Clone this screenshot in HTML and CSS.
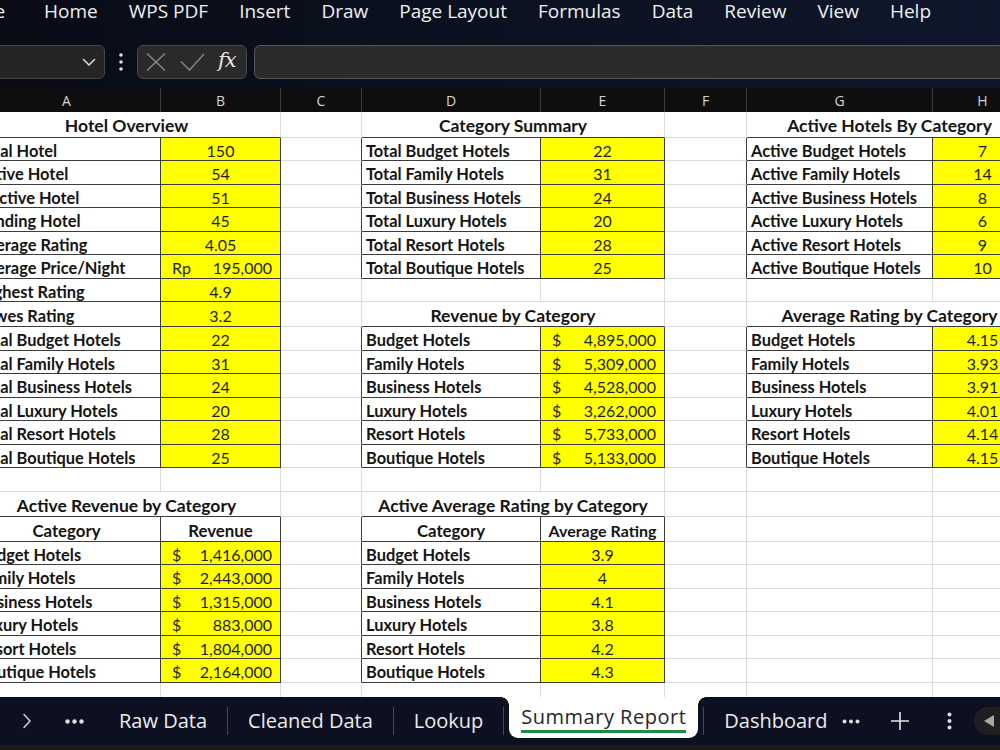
FILE: index.html
```html
<!DOCTYPE html>
<html lang="en">
<head>
<meta charset="utf-8">
<title>Summary Report</title>
<link rel="stylesheet" href="styles.css">
</head>
<body>
<div class="top">
  <nav class="menubar">
    <span class="mfile">File</span>
    <span>Home</span>
    <span>WPS PDF</span>
    <span>Insert</span>
    <span>Draw</span>
    <span>Page Layout</span>
    <span>Formulas</span>
    <span>Data</span>
    <span>Review</span>
    <span>View</span>
    <span>Help</span>
  </nav>
  <div class="fbar">
    <div class="namebox">
      <svg width="14" height="9" viewBox="0 0 14 9"><path d="M1.5 1.5 L7 7 L12.5 1.5" fill="none" stroke="#d8d8d8" stroke-width="1.6" stroke-linecap="round" stroke-linejoin="round"/></svg>
    </div>
    <div class="vdots">
      <svg width="6" height="20" viewBox="0 0 6 20"><circle cx="3" cy="3" r="1.8" fill="#dcdcdc"/><circle cx="3" cy="10" r="1.8" fill="#dcdcdc"/><circle cx="3" cy="17" r="1.8" fill="#dcdcdc"/></svg>
    </div>
    <div class="fxbox">
      <svg class="ic-x" width="20" height="18" viewBox="0 0 20 18"><path d="M1 0.5 L19 17.5 M19 0.5 L1 17.5" stroke="#858585" stroke-width="1.5" fill="none"/></svg>
      <svg class="ic-ok" width="25" height="18" viewBox="0 0 25 18"><path d="M1 8.5 L9.5 17 L24 1" stroke="#858585" stroke-width="1.5" fill="none"/></svg>
      <span class="fx">fx</span>
    </div>
    <div class="finput"></div>
  </div>
</div>

<div class="colheads">
  <div>A</div><div>B</div><div>C</div><div>D</div><div>E</div><div>F</div><div>G</div><div>H</div>
</div>

<div class="sheet">
  <div class="grid">
    <!-- r1 -->
    <div class="c t db">Hotel Overview</div><div class="c"></div><div class="c t db">Category Summary</div><div class="c"></div><div class="c t db">Active Hotels By Category</div>
    <!-- r2 -->
    <div class="c l">Total Hotel</div><div class="c v">150</div><div class="c dr"></div><div class="c l">Total Budget Hotels</div><div class="c v">22</div><div class="c dr"></div><div class="c l">Active Budget Hotels</div><div class="c v">7</div>
    <!-- r3 -->
    <div class="c l">Active Hotel</div><div class="c v">54</div><div class="c dr"></div><div class="c l">Total Family Hotels</div><div class="c v">31</div><div class="c dr"></div><div class="c l">Active Family Hotels</div><div class="c v">14</div>
    <!-- r4 -->
    <div class="c l">Inactive Hotel</div><div class="c v">51</div><div class="c dr"></div><div class="c l">Total Business Hotels</div><div class="c v">24</div><div class="c dr"></div><div class="c l">Active Business Hotels</div><div class="c v">8</div>
    <!-- r5 -->
    <div class="c l">Pending Hotel</div><div class="c v">45</div><div class="c dr"></div><div class="c l">Total Luxury Hotels</div><div class="c v">20</div><div class="c dr"></div><div class="c l">Active Luxury Hotels</div><div class="c v">6</div>
    <!-- r6 -->
    <div class="c l">Average Rating</div><div class="c v">4.05</div><div class="c dr"></div><div class="c l">Total Resort Hotels</div><div class="c v">28</div><div class="c dr"></div><div class="c l">Active Resort Hotels</div><div class="c v">9</div>
    <!-- r7 -->
    <div class="c l">Average Price/Night</div><div class="c m"><span>Rp</span><span>195,000</span></div><div class="c dr"></div><div class="c l">Total Boutique Hotels</div><div class="c v">25</div><div class="c dr"></div><div class="c l">Active Boutique Hotels</div><div class="c v">10</div>
    <!-- r8 -->
    <div class="c l">Highest Rating</div><div class="c v">4.9</div><div class="c"></div><div class="c"></div><div class="c"></div><div class="c"></div><div class="c"></div><div class="c"></div>
    <!-- r9 -->
    <div class="c l">Lowes Rating</div><div class="c v">3.2</div><div class="c"></div><div class="c t db">Revenue by Category</div><div class="c"></div><div class="c t db">Average Rating by Category</div>
    <!-- r10 -->
    <div class="c l">Total Budget Hotels</div><div class="c v">22</div><div class="c dr"></div><div class="c l">Budget Hotels</div><div class="c m"><span>$</span><span>4,895,000</span></div><div class="c dr"></div><div class="c l">Budget Hotels</div><div class="c v">4.15</div>
    <!-- r11 -->
    <div class="c l">Total Family Hotels</div><div class="c v">31</div><div class="c dr"></div><div class="c l">Family Hotels</div><div class="c m"><span>$</span><span>5,309,000</span></div><div class="c dr"></div><div class="c l">Family Hotels</div><div class="c v">3.93</div>
    <!-- r12 -->
    <div class="c l">Total Business Hotels</div><div class="c v">24</div><div class="c dr"></div><div class="c l">Business Hotels</div><div class="c m"><span>$</span><span>4,528,000</span></div><div class="c dr"></div><div class="c l">Business Hotels</div><div class="c v">3.91</div>
    <!-- r13 -->
    <div class="c l">Total Luxury Hotels</div><div class="c v">20</div><div class="c dr"></div><div class="c l">Luxury Hotels</div><div class="c m"><span>$</span><span>3,262,000</span></div><div class="c dr"></div><div class="c l">Luxury Hotels</div><div class="c v">4.01</div>
    <!-- r14 -->
    <div class="c l">Total Resort Hotels</div><div class="c v">28</div><div class="c dr"></div><div class="c l">Resort Hotels</div><div class="c m"><span>$</span><span>5,733,000</span></div><div class="c dr"></div><div class="c l">Resort Hotels</div><div class="c v">4.14</div>
    <!-- r15 -->
    <div class="c l">Total Boutique Hotels</div><div class="c v">25</div><div class="c dr"></div><div class="c l">Boutique Hotels</div><div class="c m"><span>$</span><span>5,133,000</span></div><div class="c dr"></div><div class="c l">Boutique Hotels</div><div class="c v">4.15</div>
    <!-- r16 -->
    <div class="c"></div><div class="c"></div><div class="c"></div><div class="c"></div><div class="c"></div><div class="c"></div><div class="c"></div><div class="c"></div>
    <!-- r17 -->
    <div class="c t db">Active Revenue by Category</div><div class="c"></div><div class="c t db">Active Average Rating by Category</div><div class="c"></div><div class="c"></div><div class="c"></div>
    <!-- r18 -->
    <div class="c h">Category</div><div class="c h">Revenue</div><div class="c dr"></div><div class="c h">Category</div><div class="c h hs">Average Rating</div><div class="c"></div><div class="c"></div><div class="c"></div>
    <!-- r19 -->
    <div class="c l">Budget Hotels</div><div class="c m"><span>$</span><span>1,416,000</span></div><div class="c dr"></div><div class="c l">Budget Hotels</div><div class="c v">3.9</div><div class="c"></div><div class="c"></div><div class="c"></div>
    <!-- r20 -->
    <div class="c l">Family Hotels</div><div class="c m"><span>$</span><span>2,443,000</span></div><div class="c dr"></div><div class="c l">Family Hotels</div><div class="c v">4</div><div class="c"></div><div class="c"></div><div class="c"></div>
    <!-- r21 -->
    <div class="c l">Business Hotels</div><div class="c m"><span>$</span><span>1,315,000</span></div><div class="c dr"></div><div class="c l">Business Hotels</div><div class="c v">4.1</div><div class="c"></div><div class="c"></div><div class="c"></div>
    <!-- r22 -->
    <div class="c l">Luxury Hotels</div><div class="c m"><span>$</span><span>883,000</span></div><div class="c dr"></div><div class="c l">Luxury Hotels</div><div class="c v">3.8</div><div class="c"></div><div class="c"></div><div class="c"></div>
    <!-- r23 -->
    <div class="c l">Resort Hotels</div><div class="c m"><span>$</span><span>1,804,000</span></div><div class="c dr"></div><div class="c l">Resort Hotels</div><div class="c v">4.2</div><div class="c"></div><div class="c"></div><div class="c"></div>
    <!-- r24 -->
    <div class="c l">Boutique Hotels</div><div class="c m"><span>$</span><span>2,164,000</span></div><div class="c dr"></div><div class="c l">Boutique Hotels</div><div class="c v">4.3</div><div class="c"></div><div class="c"></div><div class="c"></div>
    <!-- r25 -->
    <div class="c"></div><div class="c"></div><div class="c"></div><div class="c"></div><div class="c"></div><div class="c"></div><div class="c"></div><div class="c"></div>
  </div>
</div>

<footer class="tabs">
  <svg class="chev" width="10" height="16" viewBox="0 0 10 16"><path d="M2 1.5 L8 8 L2 14.5" fill="none" stroke="#cfcfcf" stroke-width="1.5" stroke-linecap="round" stroke-linejoin="round"/></svg>
  <svg class="more m1" width="19" height="5" viewBox="0 0 19 5"><circle cx="2.5" cy="2.5" r="2.2" fill="#e0e0e0"/><circle cx="9.5" cy="2.5" r="2.2" fill="#e0e0e0"/><circle cx="16.5" cy="2.5" r="2.2" fill="#e0e0e0"/></svg>
  <span class="tab first">Raw Data</span>
  <span class="sep"></span>
  <span class="tab">Cleaned Data</span>
  <span class="sep"></span>
  <span class="tab">Lookup</span>
  <span class="sep"></span>
  <span class="tab active"><span class="uline">Summary Report</span></span>
  <span class="sep"></span>
  <span class="tab">Dashboard</span>
  <svg class="more m2" width="18" height="5" viewBox="0 0 18 5"><circle cx="2.5" cy="2.5" r="2" fill="#e0e0e0"/><circle cx="9" cy="2.5" r="2" fill="#e0e0e0"/><circle cx="15.5" cy="2.5" r="2" fill="#e0e0e0"/></svg>
  <svg class="plus" width="18" height="18" viewBox="0 0 18 18"><path d="M9 0 V18 M0 9 H18" stroke="#e6e6e6" stroke-width="1.6"/></svg>
  <svg class="kebab" width="5" height="18" viewBox="0 0 5 18"><circle cx="2.5" cy="2.5" r="2" fill="#e0e0e0"/><circle cx="2.5" cy="9" r="2" fill="#e0e0e0"/><circle cx="2.5" cy="15.5" r="2" fill="#e0e0e0"/></svg>
  <span class="pill">
    <svg width="12" height="14" viewBox="0 0 12 14"><path d="M11 1 L1 7 L11 13 Z" fill="#a8a8a8"/></svg>
    <span class="dot"></span>
  </span>
</footer>
<div class="strip"></div>
</body>
</html>
```
FILE: styles.css
```css
* { box-sizing: border-box; margin: 0; padding: 0; }
html, body { width: 1000px; height: 750px; overflow: hidden; }
body { background: #0b0f1c; font-family: "Open Sans", "Noto Sans", sans-serif; }

.top { background: linear-gradient(90deg, #090c17 0%, #0b1120 50%, #0e172b 100%); }

.menubar {
  height: 40px;
  display: flex;
  gap: 31px;
  margin-left: -25px;
  color: #f0f0f0;
  font-size: 19px;
  line-height: 23px;
  white-space: nowrap;
}
.menubar .mfile { margin-right: 8px; }

.fbar {
  height: 48px;
  display: flex;
  align-items: flex-start;
  padding-top: 5px;
}
.namebox {
  width: 120px;
  margin-left: -15px;
  height: 34px;
  background: #252525;
  border: 1px solid #474747;
  border-radius: 6px;
  display: flex;
  align-items: center;
  justify-content: flex-end;
  padding-right: 8px;
}
.vdots {
  width: 32px;
  height: 34px;
  display: flex;
  align-items: center;
  justify-content: center;
}
.fxbox {
  width: 110px;
  height: 34px;
  background: #2a2a2a;
  border: 1px solid #4a4a4a;
  border-radius: 6px;
  display: flex;
  align-items: center;
  padding-left: 8px;
}
.ic-ok { margin-left: 14px; }
.fx {
  margin-left: 13px;
  font-family: "DejaVu Serif", "Liberation Serif", serif;
  font-style: italic;
  font-size: 21px;
  color: #e4e4e4;
  line-height: 1;
  letter-spacing: -1px;
  padding-bottom: 3px;
}
.finput {
  flex: 1;
  height: 34px;
  margin-left: 7px;
  margin-right: -10px;
  background: #2b2b2b;
  border: 1px solid #575757;
  border-radius: 6px;
}

.colheads, .grid {
  display: grid;
  width: 1060px;
  margin-left: -27px;
  grid-template-columns: 188px 120px 81px 179px 124px 82px 186px 100px;
}
.colheads {
  height: 24px;
  background: #0e0e0e;
}
.colheads div {
  border-right: 1px solid #3a3a3a;
  color: #d4d4d4;
  font-size: 14px;
  display: flex;
  align-items: center;
  justify-content: center;
}

.sheet {
  height: 585px;
  overflow: hidden;
  background: #ffffff;
}
.grid {
  grid-template-rows: 25.5px repeat(7, 23.5px) 25px repeat(7, 23.5px) 25px 25px repeat(7, 23.5px);
  font-family: Lato, "Open Sans", sans-serif;
  color: #141414;
}
.c {
  border-right: 1px solid #dddddd;
  border-bottom: 1px solid #dddddd;
  display: flex;
  align-items: center;
  padding: 3px 4px 0;
  white-space: nowrap;
  overflow: hidden;
  font-size: 16px;
  min-width: 0;
}
.t {
  grid-column: span 2;
  justify-content: center;
  font-weight: 700;
  font-size: 17.5px;
}
.l { font-weight: 700; border-color: #3c3c3c; font-size: 16.4px; }
.v { background: #ffff00; justify-content: center; border-color: #3c3c3c; color: #1e1e1e; }
.m {
  background: #ffff00;
  justify-content: space-between;
  border-color: #3c3c3c;
  padding: 3px 8px 0 11px;
  color: #1e1e1e;
}
.h { font-weight: 700; justify-content: center; border-color: #3c3c3c; font-size: 16.8px; }
.hs { font-size: 16px; }
.db { border-bottom-color: #3c3c3c; }
.dr { border-right-color: #3c3c3c; }

.tabs {
  height: 48px;
  background: #0c1020;
  display: flex;
  align-items: center;
  color: #ececec;
  font-size: 20px;
  white-space: nowrap;
}
.chev { margin-left: 22px; flex: none; }
.more { flex: none; }
.m1 { margin-left: 33px; margin-right: 15px; }
.tab { padding: 0 20px; line-height: 28px; }
.sep { width: 1px; height: 28px; background: #4a4a4a; flex: none; }
.tab.active {
  position: relative;
  align-self: flex-start;
  height: 41px;
  background: #ffffff;
  color: #262626;
  border-radius: 0 0 9px 9px;
  padding: 0 12px;
  margin: 0 5px;
  line-height: 26px;
  letter-spacing: 0.5px;
}
.tab.active::before,
.tab.active::after {
  content: "";
  position: absolute;
  top: 0;
  width: 8px;
  height: 8px;
}
.tab.active::before {
  left: -8px;
  background: radial-gradient(circle at 0 100%, #0c1020 7.5px, #ffffff 8px);
}
.tab.active::after {
  right: -8px;
  background: radial-gradient(circle at 100% 100%, #0c1020 7.5px, #ffffff 8px);
}
.uline {
  display: inline-block;
  margin-top: 7px;
  border-bottom: 3px solid #1f8b47;
}
.m2 { margin-left: -5px; }
.plus { margin-left: 31px; flex: none; }
.kebab { margin-left: 38px; flex: none; }
.pill {
  margin-left: 22px;
  flex: none;
  width: 60px;
  height: 28px;
  border-radius: 14px;
  background: #1f1f1f;
  display: flex;
  align-items: center;
  padding-left: 9px;
  gap: 8px;
}
.pill .dot {
  width: 14px;
  height: 14px;
  border-radius: 50%;
  border: 2px solid #8a8a8a;
}
.strip { height: 5px; background: #1d1b19; }
```
